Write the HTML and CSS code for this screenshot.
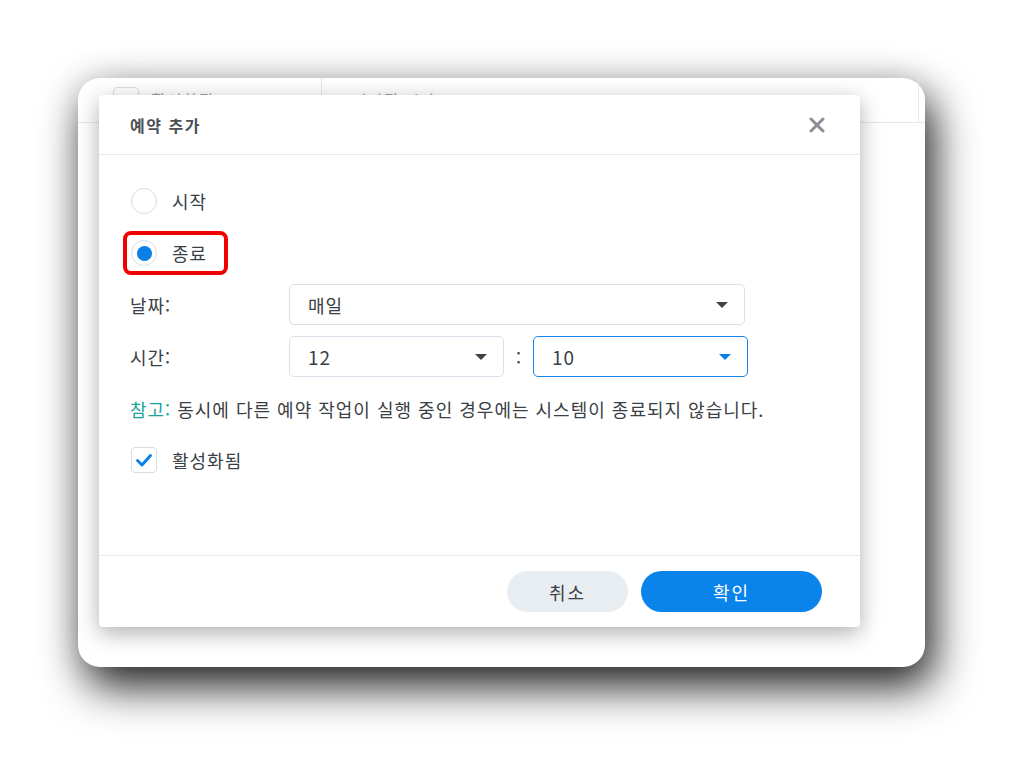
FILE: index.html
```html
<!DOCTYPE html>
<html lang="ko">
<head>
<meta charset="utf-8">
<title>예약 추가</title>
<link rel="stylesheet" href="styles.css">
</head>
<body>
<div class="stage">
  <div class="window">
    <div class="grid-head">
      <div class="col col-first"><span class="mini-box"></span><span class="col-text">활성화됨</span></div>
      <div class="col col-second"><span class="col-text">트리거된 시간</span></div>
      <div class="col col-last"></div>
    </div>

    <div class="dialog">
      <div class="dlg-head">
        <span class="dlg-title">예약 추가</span>
        <svg class="close" width="16" height="16" viewBox="0 0 16 16"><path d="M2 2 L14 14 M14 2 L2 14" stroke="#8a8f96" stroke-width="3" stroke-linecap="round"/></svg>
      </div>

      <div class="dlg-body">
        <div class="radio-row">
          <span class="radio"></span><span class="opt">시작</span>
        </div>
        <div class="radio-row second">
          <span class="radio on"><span class="dot"></span></span><span class="opt">종료</span>
          <span class="mark"></span>
        </div>

        <div class="form">
          <div class="label">날짜:</div>
          <div class="field">
            <div class="select wide"><span>매일</span><span class="caret"></span></div>
          </div>
          <div class="label">시간:</div>
          <div class="field">
            <div class="select half"><span class="num">12</span><span class="caret"></span></div>
            <span class="colon">:</span>
            <div class="select half focus"><span class="num">10</span><span class="caret blue"></span></div>
          </div>
        </div>

        <p class="note"><span class="note-key">참고:</span> 동시에 다른 예약 작업이 실행 중인 경우에는 시스템이 종료되지 않습니다.</p>

        <div class="check-row">
          <span class="check"><svg width="26" height="26" viewBox="0 0 26 26"><path d="M6.5 13.5 L11 18 L19.5 8.5" fill="none" stroke="#0a83ea" stroke-width="3" stroke-linecap="round" stroke-linejoin="round"/></svg></span>
          <span class="opt">활성화됨</span>
        </div>
      </div>

      <div class="dlg-foot">
        <button class="btn cancel">취소</button>
        <button class="btn ok">확인</button>
      </div>
    </div>
  </div>
</div>
</body>
</html>
```

FILE: styles.css
```css
html, body {
  margin: 0;
  padding: 0;
  background: #ffffff;
}
body {
  width: 1024px;
  height: 766px;
  overflow: hidden;
  font-family: "Noto Sans CJK KR", "Noto Sans", sans-serif;
  color: #3a3f45;
  letter-spacing: 1px;
}
.stage {
  padding: 78px 0 0 78px;
}
.window {
  position: relative;
  width: 847px;
  height: 589px;
  background: #ffffff;
  border-radius: 22px;
  box-shadow: 8px 20px 44px rgba(0, 0, 0, 0.85), 0 0 34px rgba(0, 0, 0, 0.14);
}
.grid-head {
  display: flex;
  height: 44px;
  border-bottom: 1px solid #e3e8ee;
}
.col {
  display: flex;
  align-items: center;
  gap: 12px;
  font-size: 16px;
  color: #9aa0a6;
}
.col-first {
  width: 243px;
  padding-left: 35px;
  box-sizing: border-box;
}
.col-second {
  flex: 1;
  padding-left: 14px;
  border-left: 1px solid #e3e8ee;
}
.col-last {
  width: 6px;
  border-left: 1px solid #e3e8ee;
}
.mini-box {
  width: 24px;
  height: 24px;
  border: 1px solid #d8dee6;
  border-radius: 4px;
}

.dialog {
  position: absolute;
  left: 21px;
  top: 17px;
  width: 761px;
  height: 532px;
  background: #ffffff;
  border-radius: 4px;
  box-shadow: 0 6px 22px rgba(0, 0, 0, 0.32);
  display: flex;
  flex-direction: column;
}
.dlg-head {
  height: 59px;
  flex: none;
  border-bottom: 1px solid #e3e9f0;
  display: flex;
  align-items: center;
  justify-content: space-between;
  padding: 0 35px 0 31px;
}
.dlg-title {
  font-size: 16px;
  font-weight: 700;
  color: #4b5058;
  letter-spacing: 1.5px;
}
.close {
  display: block;
}
.dlg-body {
  flex: 1;
  padding: 33px 31px 0 32px;
}
.radio-row, .check-row {
  position: relative;
  display: flex;
  align-items: center;
  height: 26px;
  gap: 15px;
}
.radio-row.second {
  margin-top: 26px;
}
.radio {
  width: 26px;
  height: 26px;
  box-sizing: border-box;
  border: 1px solid #d5dde7;
  border-radius: 50%;
  display: flex;
  align-items: center;
  justify-content: center;
}
.dot {
  width: 15px;
  height: 15px;
  border-radius: 50%;
  background: #0a7fe6;
}
.opt {
  font-size: 18px;
  color: #3a3f45;
}
.mark {
  position: absolute;
  left: -8px;
  top: -9px;
  width: 105px;
  height: 44px;
  box-sizing: border-box;
  border: 4px solid #f20000;
  border-radius: 8px;
}
.form {
  margin-top: 18px;
  margin-left: -1px;
  display: grid;
  grid-template-columns: 159px 460px;
  row-gap: 11px;
  align-items: center;
}
.label {
  font-size: 18px;
  color: #3a3f45;
}
.field {
  display: flex;
  align-items: center;
}
.select {
  height: 41px;
  box-sizing: border-box;
  border: 1px solid #d9e1ea;
  border-radius: 5px;
  display: flex;
  align-items: center;
  justify-content: space-between;
  padding: 0 16px 0 18px;
  font-size: 18px;
  color: #3a3f45;
}
.num {
  font-size: 19px;
  letter-spacing: 1px;
}
.select.wide {
  width: 456px;
}
.select.half {
  width: 215px;
}
.select.focus {
  border-color: #1a84e8;
}
.colon {
  width: 29px;
  text-align: center;
  font-size: 18px;
  color: #3a3f45;
  letter-spacing: 0;
}
.caret {
  width: 0;
  height: 0;
  border-left: 6px solid transparent;
  border-right: 6px solid transparent;
  border-top: 6px solid #3f444a;
}
.caret.blue {
  border-top-color: #0a7fe6;
}
.note {
  margin: 20px 0 0 -1px;
  font-size: 18px;
  line-height: 24px;
  color: #3a3f45;
}
.note-key {
  color: #1aa59c;
}
.check-row {
  margin-top: 26px;
}
.check {
  width: 26px;
  height: 26px;
  box-sizing: border-box;
  border: 1px solid #d5dde7;
  border-radius: 4px;
  display: flex;
  align-items: center;
  justify-content: center;
}
.check svg {
  display: block;
  flex: none;
}
.dlg-foot {
  height: 71px;
  flex: none;
  border-top: 1px solid #e3e9f0;
  display: flex;
  align-items: center;
  justify-content: flex-end;
  gap: 13px;
  padding: 0 38px 0 0;
}
.btn {
  height: 41px;
  border: none;
  border-radius: 21px;
  font-family: "Noto Sans CJK KR", "Noto Sans", sans-serif;
  font-size: 18px;
  letter-spacing: 2px;
  padding: 0;
}
.btn.cancel {
  width: 121px;
  background: #e8edf2;
  color: #3a3f45;
}
.btn.ok {
  width: 181px;
  background: #0a83ea;
  color: #ffffff;
}
```
